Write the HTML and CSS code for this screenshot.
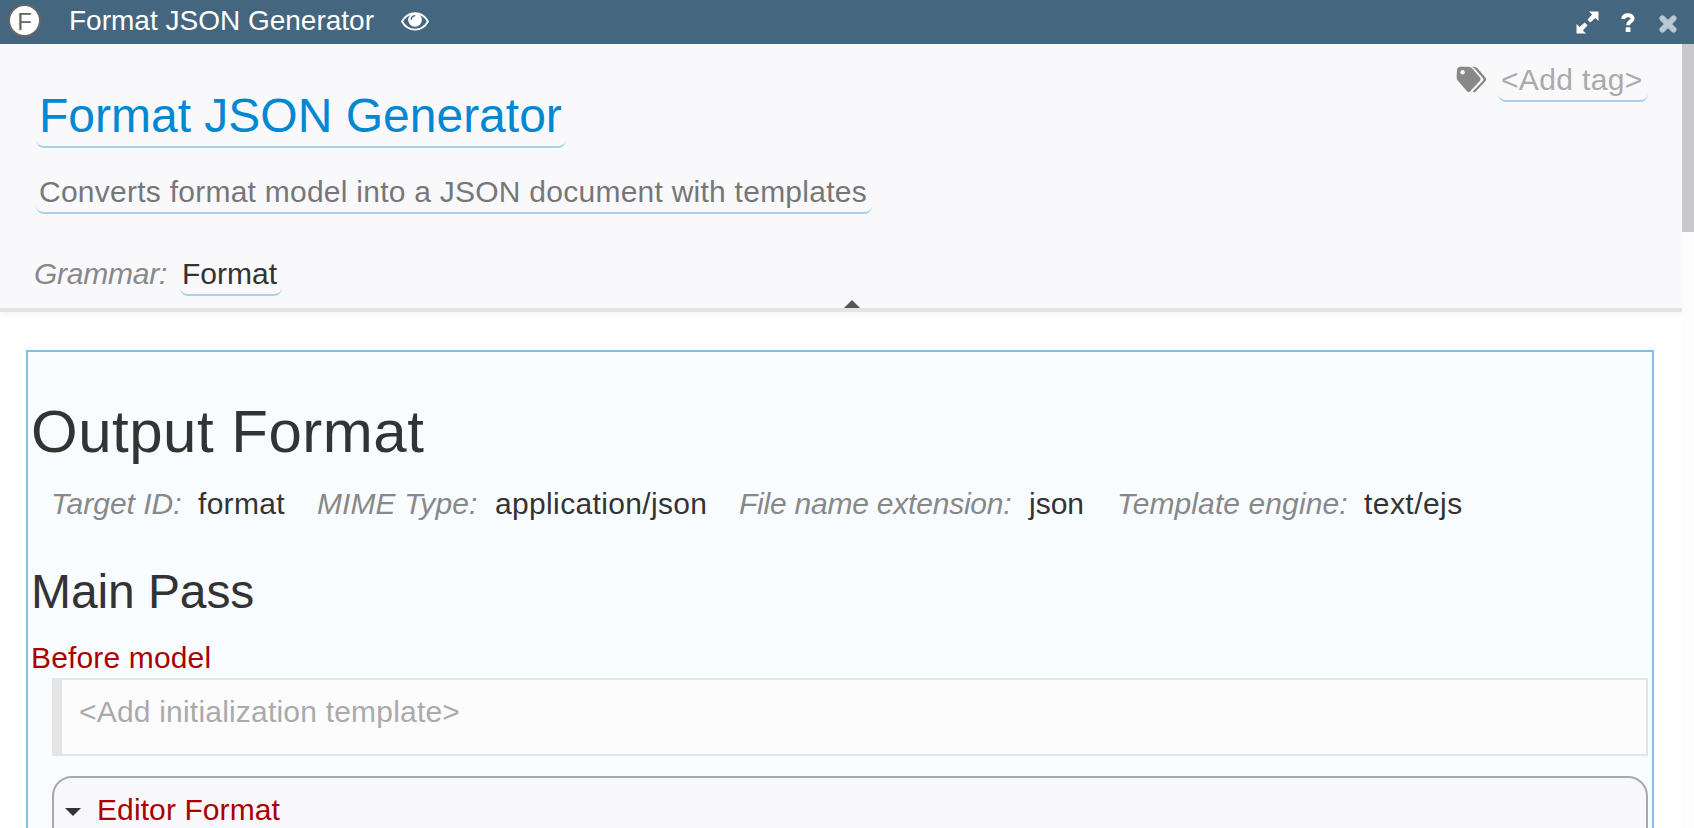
FILE: index.html
```html
<!DOCTYPE html>
<html lang="en">
<head>
<meta charset="utf-8">
<title>Format JSON Generator</title>
<link rel="stylesheet" href="styles.css">
</head>
<body>
<header class="topbar">
  <span class="badge">F</span>
  <span class="topbar-title">Format JSON Generator</span>
  <svg class="eye" viewBox="0 0 28 20"><path d="M1 9.500C4 4 8.500 1.200 14 1.200S24 4 27 9.500C24 14.800 19.500 17.600 14 17.600S4 14.800 1 9.500Z" fill="none" stroke="#fff" stroke-width="1.900"/><circle cx="14" cy="7.800" r="6.900" fill="#fff"/><path d="M10.200 7.300A4.200 4.200 0 0 1 13.800 3.700" fill="none" stroke="#44667f" stroke-width="1.200" stroke-linecap="round"/></svg>
  <div class="tools">
    <svg class="expand" viewBox="0 0 23 23"><path d="M13 .5H22.500V10L19.400 6.900 14.300 11.600 11.400 8.700 16.100 3.600ZM.5 13V22.500H10L6.900 19.400 11.600 14.300 8.700 11.400 3.600 16.100Z" fill="#fff"/></svg>
    <svg class="help" viewBox="0 0 14 19"><path d="M2 5.800C2.500 3.500 4.200 2.200 6.800 2.200C9.700 2.200 11.600 3.600 11.600 5.600C11.600 8.500 7 8.500 7 12.200" fill="none" stroke="#fff" stroke-width="4"/><rect x="4.700" y="14.300" width="4.800" height="4.700" rx=".6" fill="#fff"/></svg>
    <svg class="close" viewBox="0 0 18 18"><path d="M3.400 3.400 14.600 14.600M14.600 3.400 3.400 14.600" stroke="#bac8d2" stroke-width="5.800" stroke-linecap="round"/></svg>
  </div>
</header>
<div class="viewport">
  <main class="content">
    <section class="intro">
      <div class="intro-text">
        <h1 class="field title">Format JSON Generator</h1>
        <p class="field description">Converts format model into a JSON document with templates</p>
        <div class="grammar"><span class="label">Grammar:</span><span class="field value">Format</span></div>
      </div>
      <div class="tags">
        <svg class="tag-icon" viewBox="0 0 31 27"><path d="M3.500.8H12.500Q14.500.8 16 2.300L24 11.500Q25.400 13 24 14.800L14 25.500Q12.400 26.800 11 25.200L1.900 14.800Q.6 13.200.6 11.200L1 3.500Q1.200 1.300 3.500.8Z" fill="#888"/><circle cx="6.600" cy="6.300" r="2.200" fill="#f9f9fc"/><path d="M15.800.8H18Q20 .8 21.500 2.300L29.600 11.800Q31 13.300 29.600 15L19.500 25.800Q18 27 16.700 25.500L27 14.700Q27.800 13.500 27 12.300L18.500 2.600Q17.500 1.300 15.800.8Z" fill="#888"/></svg>
        <span class="field tag">&lt;Add tag&gt;</span>
      </div>
      <span class="collapse"></span>
    </section>
    <section class="panel">
      <h2 class="output">Output Format</h2>
      <div class="meta">
        <span class="label target">Target ID:</span><span class="value v1">format</span>
        <span class="label mime">MIME Type:</span><span class="value v2">application/json</span>
        <span class="label ext">File name extension:</span><span class="value v3">json</span>
        <span class="label engine">Template engine:</span><span class="value v4">text/ejs</span>
      </div>
      <h3 class="pass">Main Pass</h3>
      <div class="before">Before model</div>
      <div class="placeholder"><span class="hint">&lt;Add initialization template&gt;</span></div>
      <div class="card"><span class="caret"></span><span class="editor">Editor Format</span></div>
    </section>
  </main>
  <div class="scrollbar"><div class="thumb"></div></div>
</div>
</body>
</html>
```
FILE: styles.css
```css
* { box-sizing: border-box; }
html, body { margin: 0; height: 100%; overflow: hidden; }
body {
  display: flex;
  flex-direction: column;
  background: #fff;
  color: #333;
  font: 30px/36px "Liberation Sans", Arial, sans-serif;
  white-space: nowrap;
}
h1, h2, h3, p { margin: 0; font-weight: 400; }
svg { display: block; flex: none; }

.topbar {
  flex: none;
  height: 44px;
  display: flex;
  align-items: flex-start;
  padding: 0 17px 0 8px;
  background: #44667f;
  color: #fff;
}
.badge {
  width: 33px;
  height: 33px;
  margin-top: 4px;
  border: 2px solid #666;
  border-radius: 50%;
  background: #fff;
  color: #666;
  font-size: 24px;
  line-height: 31px;
  text-align: center;
}
.topbar-title { margin: 3px 0 0 28px; width: 304px; font-size: 28px; }
.eye { width: 28px; height: 20px; margin: 12px 0 0 28px; }
.tools { display: flex; align-items: flex-start; margin-left: auto; }
.expand { width: 23px; height: 23px; margin-top: 11px; }
.help { width: 14px; height: 19px; margin: 13px 0 0 22px; }
.close { width: 18px; height: 18px; margin: 15px 0 0 24px; }

.viewport { flex: 1; min-height: 0; display: flex; }
.content { flex: 1; min-width: 0; overflow: hidden; }
.scrollbar { width: 12px; background: #fdfdfd; }
.thumb { height: 188px; background: #c9c8cd; }

.intro {
  position: relative;
  display: flex;
  justify-content: space-between;
  height: 268px;
  padding: 0 34px 0 36px;
  border-bottom: 4px solid #e4e4e4;
  background: #f9f9fc;
  box-shadow: 0 2px 6px rgba(0, 0, 0, .05);
}
.intro-text { display: flex; flex-direction: column; align-items: flex-start; padding-top: 44px; }
.field {
  padding: 0 4px 2px 3px;
  border-bottom: 2px solid #a5d2ec;
  border-radius: 0 0 8px 8px;
}
.title { width: 530px; height: 60px; font-size: 48px; line-height: 56px; color: #0088d1; }
.description { width: 836px; margin-top: 26px; color: #777; letter-spacing: .25px; }
.grammar { display: flex; margin: 42px 0 0 -2px; }
.label { color: #888; font-style: italic; }
.grammar .label { width: 146px; letter-spacing: -.25px; }
.grammar .field { width: 102px; padding-left: 2px; }
.tags { display: flex; align-items: flex-start; padding-top: 18px; }
.tag-icon { width: 31px; height: 27px; margin: 4px 11px 0 0; }
.tag { width: 150px; color: #aaa; letter-spacing: .35px; }
.collapse {
  position: absolute;
  left: 844px;
  bottom: 0;
  border: 8px solid transparent;
  border-top: 0;
  border-bottom-color: #555;
}

.panel {
  height: 520px;
  margin: 38px 28px 0 26px;
  padding: 46px 4px 0 3px;
  border: 2px solid #7fc0e3;
  background: #f9fcff;
}
.output { font-size: 60px; line-height: 68px; letter-spacing: .5px; }
.meta { display: flex; margin-top: 20px; padding-left: 20px; }
.target { width: 147px; }
.v1 { width: 119px; letter-spacing: .3px; }
.mime { width: 178px; letter-spacing: .1px; }
.v2 { width: 244px; letter-spacing: .35px; }
.ext { width: 290px; letter-spacing: -.22px; }
.v3 { width: 88px; }
.engine { width: 247px; letter-spacing: .1px; }
.v4 { letter-spacing: .45px; }
.pass { margin-top: 42px; font-size: 48px; line-height: 56px; letter-spacing: -.1px; }
.before { margin-top: 20px; color: #aa0000; letter-spacing: .15px; }
.placeholder {
  height: 78px;
  margin: 2px 0 0 21px;
  padding: 14px 17px;
  border: 2px solid #e5e5e5;
  border-left-width: 10px;
  background: #fcfcfc;
  color: #aaa;
}
.hint { letter-spacing: .2px; }
.card {
  display: flex;
  height: 100px;
  margin: 20px 0 0 21px;
  padding: 14px 11px;
  border: 2px solid #a9a9a9;
  border-radius: 20px;
  background: #f8f7fc;
  color: #aa0000;
}
.caret {
  height: 0;
  margin: 16px 16px 0 0;
  border: 8.500px solid transparent;
  border-bottom: 0;
  border-top-color: #333;
}
.editor { letter-spacing: .1px; }
```
